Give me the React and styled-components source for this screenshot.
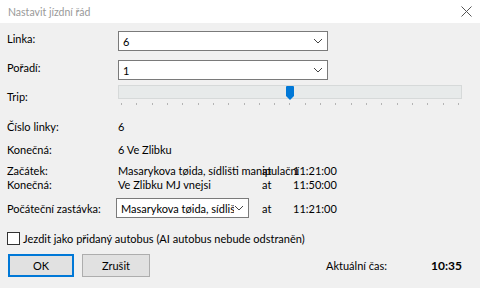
import React from "react";
import styled, { createGlobalStyle } from "styled-components";

const GlobalStyle = createGlobalStyle`
  html, body { margin: 0; padding: 0; }
  body {
    width: 480px;
    height: 288px;
    overflow: hidden;
    background: #f0f0f0;
    font-family: Lato, "Noto Sans", sans-serif;
    font-size: 11px;
    color: #000;
  }
`;

const Window = styled.div`
  width: 480px;
  height: 288px;
  display: flex;
  flex-direction: column;
  background: #f0f0f0;
`;

const TitleBar = styled.div`
  height: 23px;
  background: #fff;
  display: flex;
  align-items: center;
  justify-content: space-between;
  padding: 0 8px 0 8px;
  color: #999;
  font-size: 10.5px;
`;

const CloseButton = styled.div`
  width: 12px;
  height: 12px;
  display: flex;
  align-items: center;
  justify-content: center;
`;

const Body = styled.div`
  flex: 1;
  padding: 8px 7px 0 7px;
  display: flex;
  flex-direction: column;
`;

const Row = styled.div`
  display: grid;
  grid-template-columns: 111px 144px 31px auto;
  align-items: ${(p) => p.$align || "center"};
  height: ${(p) => p.$h}px;
  margin-top: ${(p) => p.$mt || 0}px;
  white-space: nowrap;
`;

const Label = styled.div`
  padding-top: ${(p) => p.$pt || 0}px;
`;

const Value = styled.div`
  overflow: visible;
  white-space: nowrap;
`;

const Combo = styled.div`
  width: ${(p) => p.$w}px;
  height: 20px;
  box-sizing: border-box;
  border: 1px solid #7a7a7a;
  background: #fff;
  display: flex;
  align-items: center;
  justify-content: space-between;
  padding: 0 4px 0 4px;
  margin-left: ${(p) => p.$ml || 0}px;
  overflow: hidden;
`;

const ComboText = styled.span`
  overflow: hidden;
  white-space: nowrap;
  flex: 1;
`;

const Track = styled.div`
  width: 344px;
  display: flex;
  flex-direction: column;
`;

const TrackBar = styled.div`
  height: 14px;
  box-sizing: border-box;
  background: #e7eaea;
  border: 1px solid #d6d9d9;
  position: relative;
`;

const Thumb = styled.div`
  position: absolute;
  top: 0;
  left: 167px;
  width: 8px;
  height: 14px;
`;

const Ticks = styled.div`
  display: flex;
  justify-content: space-between;
  padding: 0 3px 0 3px;
  margin-top: 4px;
`;

const Tick = styled.div`
  width: 1px;
  height: 2px;
  background: #b4b4b4;
`;

const CheckRow = styled.label`
  display: flex;
  align-items: center;
  gap: 3px;
  margin-top: 13px;
  height: 14px;
`;

const CheckBox = styled.span`
  width: 13px;
  height: 13px;
  box-sizing: border-box;
  border: 1px solid #333;
  background: #fff;
`;

const Footer = styled.div`
  display: flex;
  align-items: center;
  margin-top: 9px;
  padding-left: 1px;
`;

const Button = styled.div`
  width: ${(p) => p.$w}px;
  height: 23px;
  box-sizing: border-box;
  display: flex;
  align-items: center;
  justify-content: center;
  background: #e1e1e1;
  border: 1px solid ${(p) => (p.$primary ? "#0078d7" : "#adadad")};
  box-shadow: ${(p) => (p.$primary ? "inset 0 0 0 1px #0078d7" : "none")};
  margin-right: 8px;
`;

const ClockLabel = styled.div`
  margin-left: 168px;
  width: 105px;
`;

const Clock = styled.div`
  font-weight: bold;
  font-size: 12px;
`;

const Chevron = () => (
  <svg width="10" height="6" viewBox="0 0 10 6">
    <path d="M1 1 L5 5 L9 1" fill="none" stroke="#444" strokeWidth="1" />
  </svg>
);

export default function App() {
  const ticks = Array.from({ length: 23 });
  return (
    <Window>
      <GlobalStyle />
      <TitleBar>
        <span>Nastavit jízdní řád</span>
        <CloseButton>
          <svg width="11" height="11" viewBox="0 0 11 11">
            <path d="M0.5 0.5 L10.5 10.5 M10.5 0.5 L0.5 10.5" stroke="#555" strokeWidth="1" />
          </svg>
        </CloseButton>
      </TitleBar>
      <Body>
        <Row $h={20} $align="start">
          <Label $pt={1}>Linka:</Label>
          <Combo $w={210}>
            <ComboText>6</ComboText>
            <Chevron />
          </Combo>
        </Row>
        <Row $h={20} $mt={9} $align="start">
          <Label $pt={1}>Pořadí:</Label>
          <Combo $w={210}>
            <ComboText>1</ComboText>
            <Chevron />
          </Combo>
        </Row>
        <Row $h={24} $mt={5} $align="start">
          <Label $pt={5}>Trip:</Label>
          <Track>
            <TrackBar>
              <Thumb>
                <svg width="8" height="14" viewBox="0 0 8 14">
                  <path d="M0 1 Q0 0 1 0 L7 0 Q8 0 8 1 L8 10 L4 14 L0 10 Z" fill="#0078d7" />
                </svg>
              </Thumb>
            </TrackBar>
            <Ticks>
              {ticks.map((_, i) => (
                <Tick key={i} />
              ))}
            </Ticks>
          </Track>
        </Row>
        <Row $h={14} $mt={10}>
          <Label>Číslo linky:</Label>
          <Value>6</Value>
        </Row>
        <Row $h={14} $mt={9}>
          <Label>Konečná:</Label>
          <Value>6 Ve Zlibku</Value>
        </Row>
        <Row $h={14} $mt={7}>
          <Label>Začátek:</Label>
          <Value>Masarykova tøida, sídlišti manipulační</Value>
          <Value>at</Value>
          <Value>11:21:00</Value>
        </Row>
        <Row $h={14} $mt={0}>
          <Label>Konečná:</Label>
          <Value>Ve Zlibku MJ vnejsi</Value>
          <Value>at</Value>
          <Value>11:50:00</Value>
        </Row>
        <Row $h={20} $mt={7}>
          <Label>Počáteční zastávka:</Label>
          <Combo $w={133} $ml={-2}>
            <ComboText>Masarykova tøida, sídlišti manipulační</ComboText>
            <Chevron />
          </Combo>
          <Value>at</Value>
          <Value>11:21:00</Value>
        </Row>
        <CheckRow>
          <CheckBox />
          <span>Jezdit jako přidaný autobus (AI autobus nebude odstraněn)</span>
        </CheckRow>
        <Footer>
          <Button $w={66} $primary>OK</Button>
          <Button $w={68}>Zrušit</Button>
          <ClockLabel>Aktuální čas:</ClockLabel>
          <Clock>10:35</Clock>
        </Footer>
      </Body>
    </Window>
  );
}
